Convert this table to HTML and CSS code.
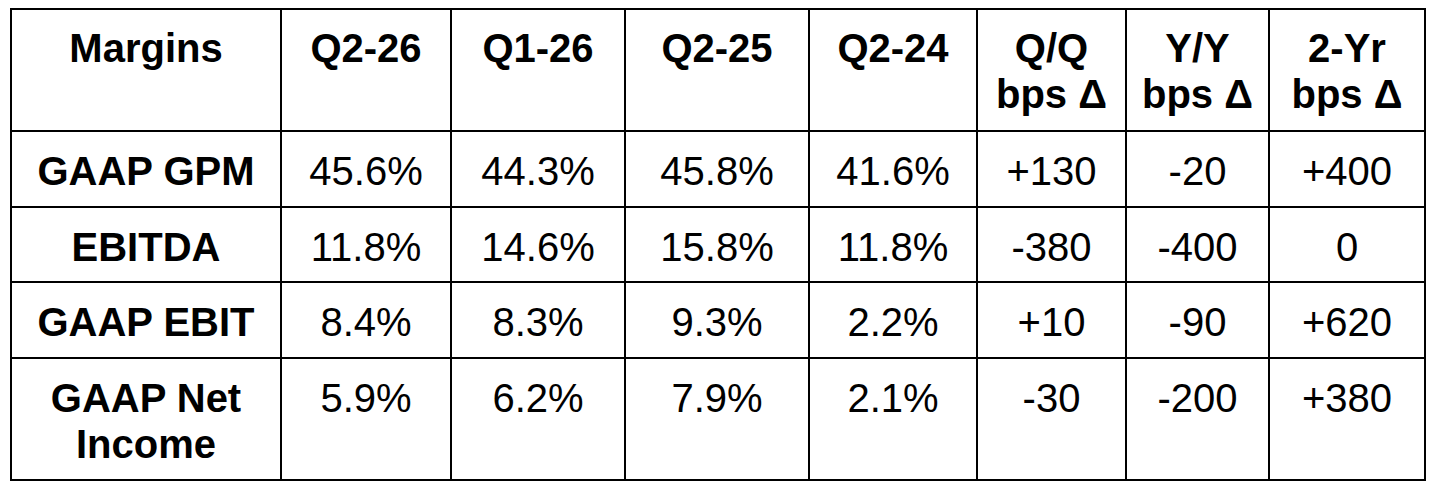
FILE: index.html
```html
<!DOCTYPE html>
<html lang="en">
<head>
<meta charset="utf-8">
<title>Margins</title>
<link rel="stylesheet" href="styles.css">
</head>
<body>
<table class="margins">
  <colgroup>
    <col class="c1"><col class="c2"><col class="c3"><col class="c4"><col class="c5"><col class="c6"><col class="c7"><col class="c8">
  </colgroup>
  <thead>
    <tr class="head">
      <th>Margins</th>
      <th>Q2-26</th>
      <th>Q1-26</th>
      <th>Q2-25</th>
      <th>Q2-24</th>
      <th>Q/Q<br>bps Δ</th>
      <th>Y/Y<br>bps Δ</th>
      <th>2-Yr<br>bps Δ</th>
    </tr>
  </thead>
  <tbody>
    <tr class="r76">
      <th>GAAP GPM</th>
      <td>45.6%</td><td>44.3%</td><td>45.8%</td><td>41.6%</td><td>+130</td><td>-20</td><td>+400</td>
    </tr>
    <tr class="r75">
      <th>EBITDA</th>
      <td>11.8%</td><td>14.6%</td><td>15.8%</td><td>11.8%</td><td>-380</td><td>-400</td><td>0</td>
    </tr>
    <tr class="r76">
      <th>GAAP EBIT</th>
      <td>8.4%</td><td>8.3%</td><td>9.3%</td><td>2.2%</td><td>+10</td><td>-90</td><td>+620</td>
    </tr>
    <tr class="r122">
      <th>GAAP Net<br>Income</th>
      <td>5.9%</td><td>6.2%</td><td>7.9%</td><td>2.1%</td><td>-30</td><td>-200</td><td>+380</td>
    </tr>
  </tbody>
</table>
</body>
</html>
```

FILE: styles.css
```css
html, body {
  margin: 0;
  padding: 0;
  background: #ffffff;
}

body {
  font-family: "Liberation Sans", Arial, sans-serif;
  color: #000000;
}

.margins {
  margin: 8px 0 0 10px;
  border-collapse: separate;
  border-spacing: 0;
  table-layout: fixed;
  width: 1416px;
  border-top: 2px solid #000;
  border-left: 2px solid #000;
}

.c1 { width: 270px; }
.c2 { width: 170px; }
.c3 { width: 174px; }
.c4 { width: 184px; }
.c5 { width: 168px; }
.c6 { width: 149px; }
.c7 { width: 143px; }
.c8 { width: 156px; }

.margins th,
.margins td {
  box-sizing: border-box;
  border-right: 2px solid #000;
  border-bottom: 2px solid #000;
  padding: 15px 0 0 0;
  text-align: center;
  vertical-align: top;
  font-size: 40px;
  line-height: 46px;
  overflow: hidden;
}

.margins th {
  font-weight: bold;
}

.margins td {
  font-weight: normal;
}

.head th { height: 122px; }
.r76 th, .r76 td { height: 76px; padding-top: 16px; }
.r75 th, .r75 td { height: 75px; padding-top: 16px; }
.r122 th, .r122 td { height: 122px; padding-top: 16px; }
```
